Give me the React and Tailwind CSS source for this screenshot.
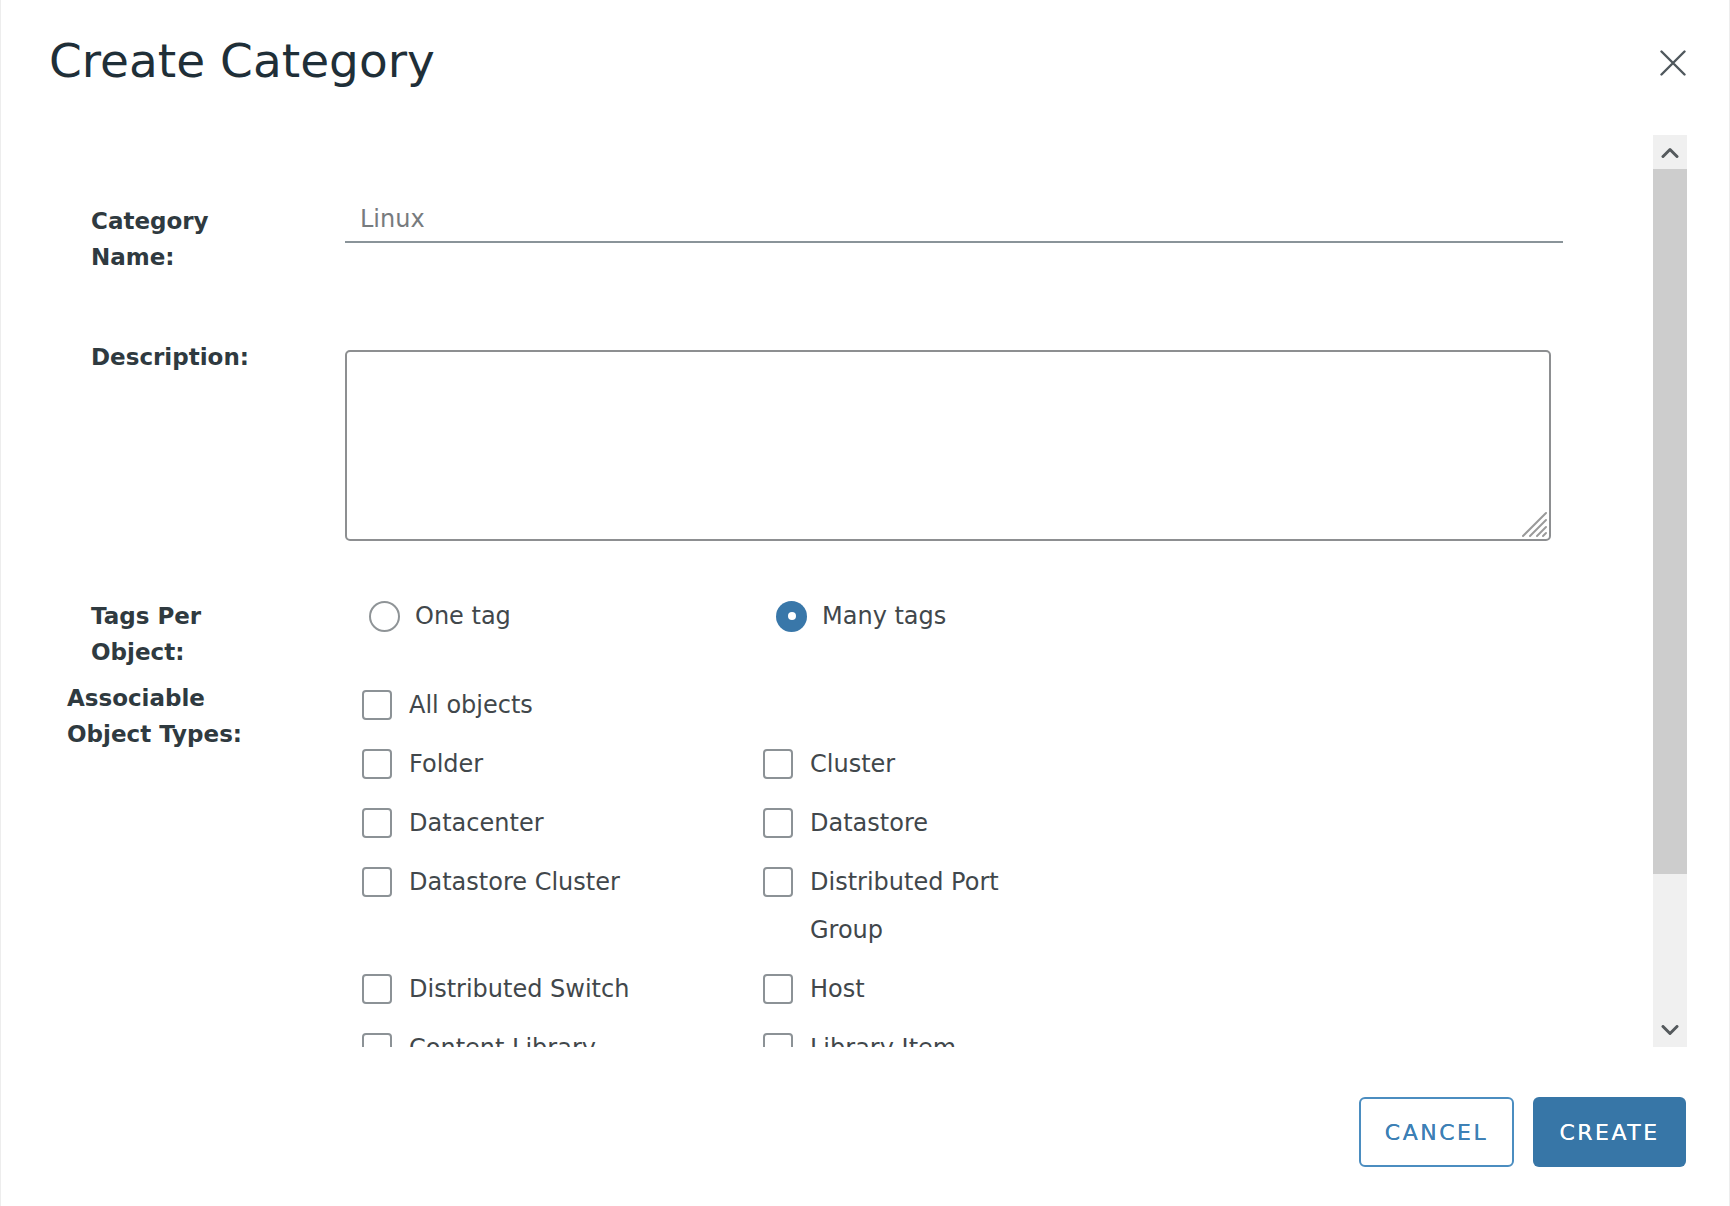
function Label({ children, pad = "pl-[90px]" }) {
  return (
    <div className={`w-[344px] shrink-0 ${pad} text-[23px] font-bold leading-[36px] text-[#2f3a40]`}>
      {children}
    </div>
  );
}

function Radio({ checked, label, className = "" }) {
  return (
    <div className={`flex items-center gap-[15px] ${className}`}>
      {checked ? (
        <span className="flex h-[31px] w-[31px] items-center justify-center rounded-full bg-[#3977a9]">
          <span className="h-[8px] w-[8px] rounded-full bg-white" />
        </span>
      ) : (
        <span className="h-[31px] w-[31px] rounded-full border-2 border-[#8f9497]" />
      )}
      <span className="text-[24px] leading-[36px] text-[#41474b]">{label}</span>
    </div>
  );
}

function Check({ label, narrow }) {
  return (
    <div className="flex items-start gap-[17px]">
      <span className="mt-[9px] h-[30px] w-[30px] shrink-0 rounded-[4px] border-2 border-[#8c9296]" />
      <span className={`text-[24px] leading-[48px] text-[#41474b] ${narrow ? "max-w-[240px]" : ""}`}>
        {label}
      </span>
    </div>
  );
}

function Chevron({ up }) {
  return (
    <svg width="18" height="11" viewBox="0 0 18 11" fill="none">
      <path
        d={up ? "M2 9.5 L9 2.5 L16 9.5" : "M2 1.5 L9 8.5 L16 1.5"}
        stroke="#555a5d"
        strokeWidth="3"
        strokeLinecap="round"
        strokeLinejoin="round"
      />
    </svg>
  );
}

const types = [
  ["All objects", null],
  ["Folder", "Cluster"],
  ["Datacenter", "Datastore"],
  ["Datastore Cluster", "Distributed Port Group"],
  ["Distributed Switch", "Host"],
  ["Content Library", "Library Item"],
];

export default function App() {
  return (
    <div className="flex h-[1206px] w-[1730px] flex-col border-x border-[#ededed] bg-white font-['DejaVu_Sans',sans-serif]">
      <div className="flex h-[135px] shrink-0 items-start justify-between pl-[48px] pr-[43px]">
        <h2 className="pt-[37px] text-[47px] font-normal leading-none text-[#1f2f38]">Create Category</h2>
        <button className="mt-[50px]" aria-label="Close">
          <svg width="26" height="26" viewBox="0 0 26 26" fill="none">
            <path d="M1.5 1.5 L24.5 24.5 M24.5 1.5 L1.5 24.5" stroke="#4f585d" strokeWidth="2.4" strokeLinecap="round" />
          </svg>
        </button>
      </div>

      <div className="flex h-[912px] shrink-0">
        <div className="flex-1 overflow-hidden">
          <div className="mt-[62px] flex items-start">
            <div className="pt-[6px]">
              <Label>
                Category
                <br />
                Name:
              </Label>
            </div>
            <div className="flex h-[46px] w-[1218px] items-center border-b-2 border-[#8a9499] pl-[15px] text-[24px] text-[#777b7e]">
              Linux
            </div>
          </div>

          <div className="mt-[64px] flex items-start">
            <Label>Description:</Label>
            <div className="relative mt-[11px] h-[191px] w-[1206px] rounded-[5px] border-2 border-[#8d8f91]">
              <svg className="absolute bottom-[1px] right-[1px]" width="28" height="28" viewBox="0 0 28 28">
                <g stroke="#9a9a9a" strokeWidth="2" strokeLinecap="round">
                  <path d="M3 26 L26 3" />
                  <path d="M10 26 L26 10" />
                  <path d="M17 26 L26 17" />
                  <path d="M23 26 L26 23" />
                </g>
              </svg>
            </div>
          </div>

          <div className="mt-[57px] flex items-start">
            <Label>
              Tags Per
              <br />
              Object:
            </Label>
            <div className="flex h-[36px] items-center">
              <Radio label="One tag" className="ml-[24px] w-[407px]" />
              <Radio label="Many tags" checked />
            </div>
          </div>

          <div className="mt-[10px] flex items-start">
            <Label pad="pl-[66px]">
              Associable
              <br />
              Object Types:
            </Label>
            <div className="ml-[17px] mt-[1px] grid grid-cols-[401px_401px] gap-y-[11px]">
              {types.map(([a, b]) => (
                <div key={a} className="contents">
                  <Check label={a} />
                  {b ? <Check label={b} narrow /> : <div />}
                </div>
              ))}
            </div>
          </div>
        </div>

        <div className="flex w-[34px] shrink-0 flex-col bg-[#f0f0f0]">
          <div className="flex h-[34px] items-center justify-center">
            <Chevron up />
          </div>
          <div className="h-[705px] bg-[#cdcdcd]" />
          <div className="flex-1" />
          <div className="flex h-[34px] items-center justify-center">
            <Chevron />
          </div>
        </div>
        <div className="w-[42px] shrink-0" />
      </div>

      <div className="flex justify-end gap-[19px] pr-[43px] pt-[50px]">
        <button className="h-[70px] w-[155px] rounded-[6px] border-2 border-[#4b8dc0] text-[22px] tracking-[2.5px] text-[#3d80b5] [text-shadow:0_0_0.6px_#3d80b5]">
          CANCEL
        </button>
        <button className="h-[70px] w-[153px] rounded-[6px] bg-[#3776a7] text-[22px] tracking-[2.5px] text-white [text-shadow:0_0_0.6px_#ffffff]">
          CREATE
        </button>
      </div>
    </div>
  );
}
